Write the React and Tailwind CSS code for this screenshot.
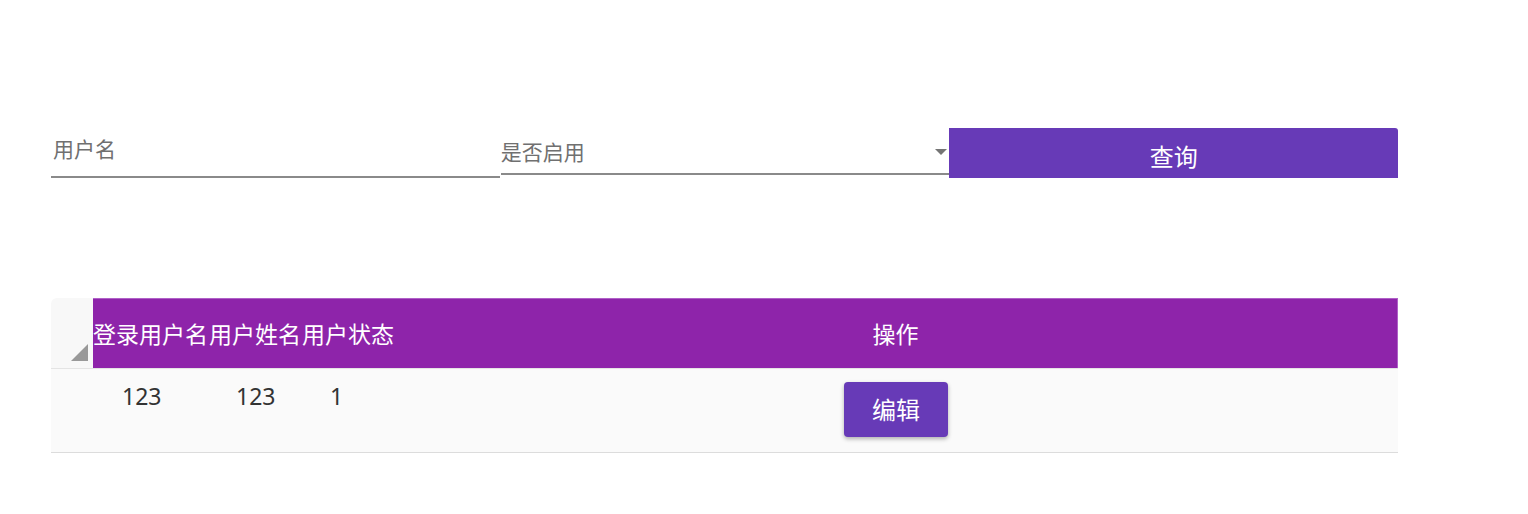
import { useState } from "react";

const font = { fontFamily: '"Noto Sans", "Noto Sans CJK SC", sans-serif' };

const rows = [{ login: "123", name: "123", status: "1" }];

export default function App() {
  const [userName, setUserName] = useState("");

  return (
    <div className="min-h-screen bg-white" style={font}>
      <div className="w-[1347px] ml-[51px] pt-[128px]">
        {/* filters */}
        <div className="flex h-[50px]">
          <div className="w-[449px] h-full flex flex-col">
            <input
              value={userName}
              onChange={(e) => setUserName(e.target.value)}
              placeholder="用户名"
              className="flex-1 pl-[2px] pb-[6px] text-[21px] leading-none text-[#333] placeholder:text-[#707070] outline-none bg-transparent"
            />
            <div className="h-[2px] bg-[#8a8a8a]" />
          </div>
          <div className="w-[449px] h-[47px] ml-[1px] flex flex-col">
            <div className="flex-1 flex items-center justify-between pr-[2px] pt-[4px]">
              <span className="text-[21px] leading-none text-[#707070]">是否启用</span>
              <span className="w-0 h-0 border-l-[6.5px] border-r-[6.5px] border-t-[6px] border-l-transparent border-r-transparent border-t-[#757575] mt-[-2px]" />
            </div>
            <div className="h-[2px] bg-[#8a8a8a]" />
          </div>
          <button className="w-[449px] h-full bg-[#673ab7] text-white text-[24px] leading-none rounded-tr-[3px] pt-[7px]">
            查询
          </button>
        </div>

        {/* table */}
        <div className="mt-[120px]">
          <div className="flex h-[70px] text-white text-[23px] leading-none">
            <div className="w-[42px] bg-[#f8f8f8] rounded-tl-[6px] relative">
              <span className="absolute right-[5px] bottom-[7px] w-0 h-0 border-l-[17px] border-b-[17px] border-l-transparent border-b-[#999]" />
            </div>
            <div className="flex-1 bg-[#8e24aa] border-t border-r border-[#b060c8] flex items-center pt-[2px]">
              <div className="w-[116px] whitespace-nowrap">登录用户名</div>
              <div className="w-[93px] whitespace-nowrap">用户姓名</div>
              <div className="w-[92px] whitespace-nowrap">用户状态</div>
              <div className="flex-1 text-center">操作</div>
            </div>
          </div>
          {rows.map((r, i) => (
            <div key={i} className="flex h-[85px] bg-[#fafafa] border-t border-t-[#e4e4e4] border-b border-b-[#dcdcdc] text-[23px] text-[#333]">
              <div className="w-[42px]" />
              <div className="w-[116px] pl-[29px] pt-[10px]">{r.login}</div>
              <div className="w-[93px] pl-[27px] pt-[10px]">{r.name}</div>
              <div className="w-[92px] pl-[28px] pt-[10px]">{r.status}</div>
              <div className="flex-1 flex justify-center pt-[13px]">
                <button className="w-[104px] h-[55px] rounded-[4px] bg-[#673ab7] text-white text-[24px] leading-none shadow-[0_2px_4px_rgba(0,0,0,0.3)]">
                  编辑
                </button>
              </div>
            </div>
          ))}
        </div>
      </div>
    </div>
  );
}
